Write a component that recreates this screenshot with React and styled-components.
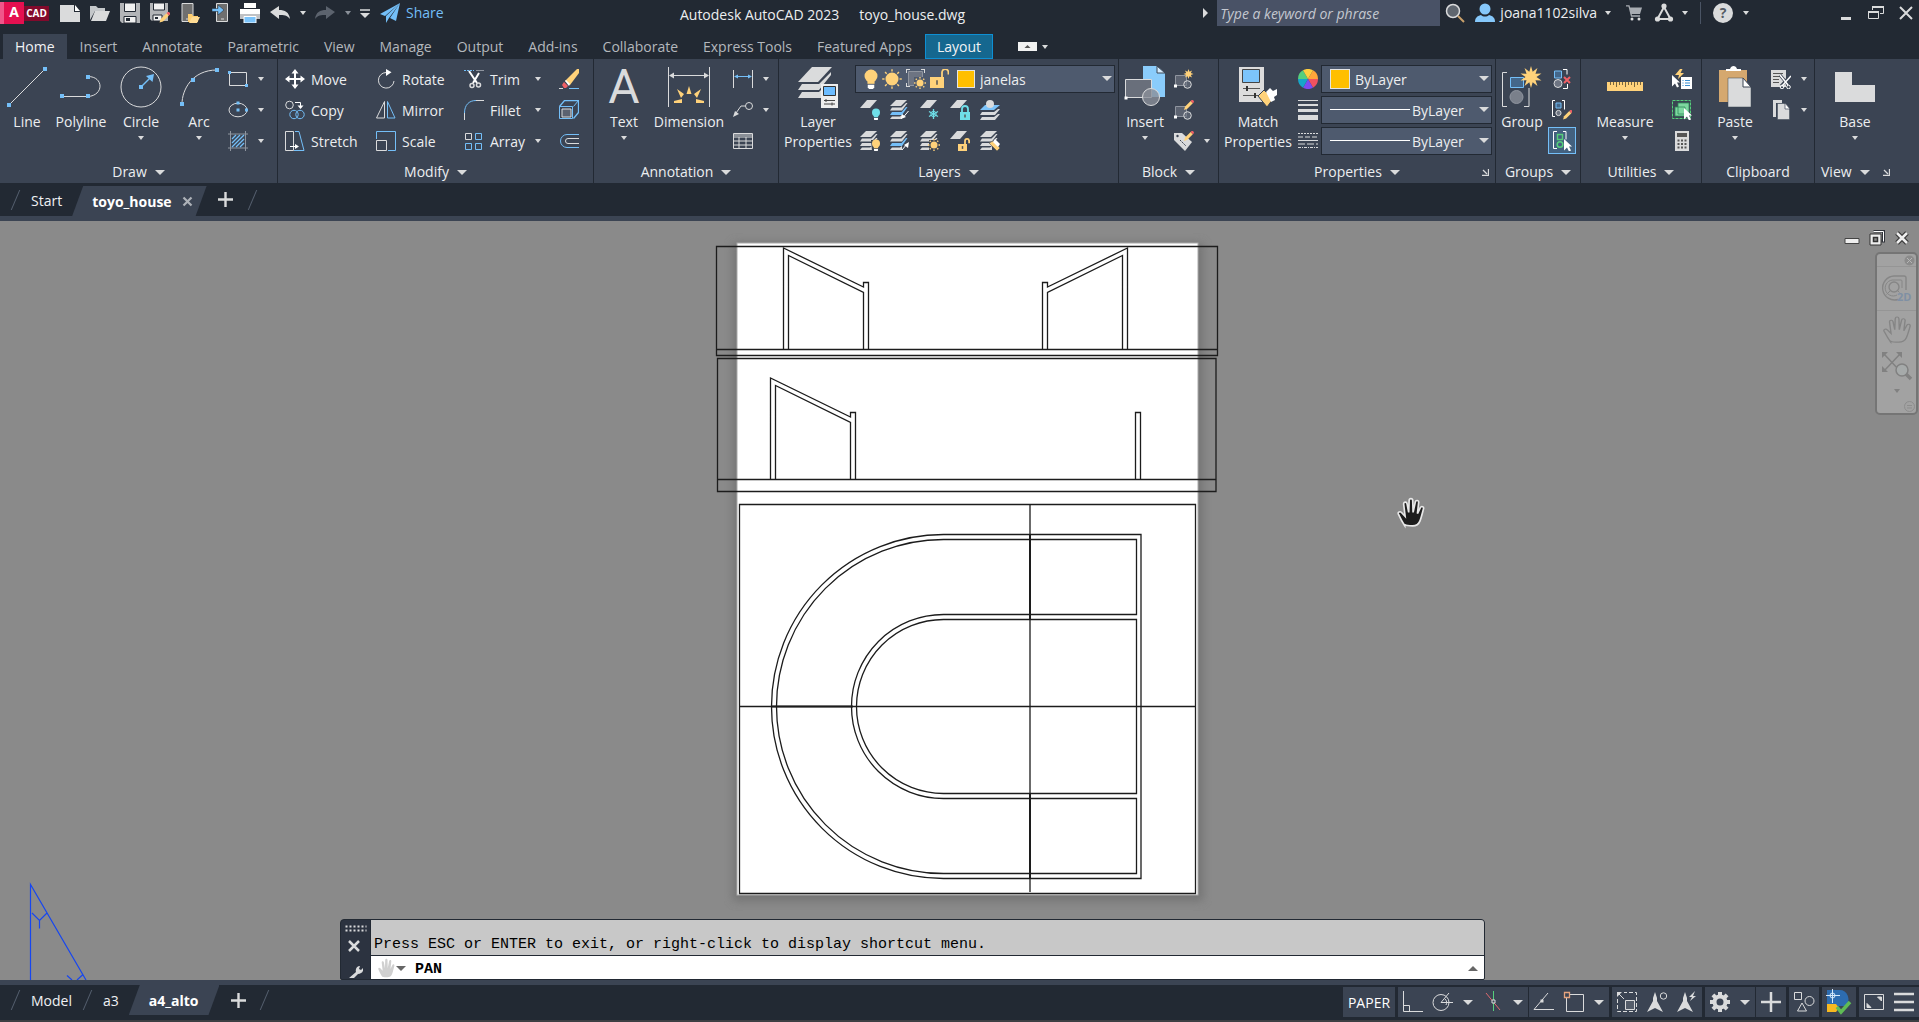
import React from "react";
import styled, { createGlobalStyle } from "styled-components";

const W = "#dadbdc";
const B = "#74bff8";
const Y = "#ffd27a";
const G = "#8f959f";
const P = "#3b4453";
const D = "#222933";

const Global = createGlobalStyle`
  * { box-sizing: border-box; }
  body { margin: 0; background: ${D}; }
  button, input, select {
    font: inherit; color: inherit; border: 0; background: none; padding: 0; margin: 0; outline: 0; border-radius: 0;
  }
  svg { display: block; flex: none; }
`;

/* ---------- layout parts ---------- */

const Window = styled.div`
  display: flex;
  flex-direction: column;
  height: 100vh;
  overflow: hidden;
  background: ${D};
  color: #eceef0;
  font: 14px/20px "Open Sans", "Noto Sans", sans-serif;
`;

const TitleBar = styled.header`
  display: flex;
  flex: none;
  height: 26px;
  align-items: center;
`;

const TitleText = styled.div`
  flex: 1;
  display: flex;
  justify-content: center;
  gap: 20px;
  padding: 3px 0 0 4px;
  white-space: nowrap;
`;

const IconButton = styled.button`
  display: flex;
  flex: none;
  align-items: center;
  justify-content: center;
  width: ${(p) => p.$w || 30}px;
  height: ${(p) => p.$h || 26}px;
`;

const Logo = styled.div`
  display: flex;
  width: 55px;
  height: 26px;
  align-items: center;
`;

const LogoA = styled.b`
  width: 24px;
  height: 22px;
  padding-left: 4px;
  text-align: center;
  color: #fff;
  background: linear-gradient(90deg, #f0568a 4px, #e51050 4px);
`;

const LogoCad = styled.b`
  width: 25px;
  height: 15px;
  text-align: center;
  font-size: 10px;
  line-height: 15px;
  color: #fff;
  background: #820a2c;
`;

const ShareButton = styled.button`
  display: flex;
  align-items: center;
  gap: 6px;
  margin-left: 5px;
  color: ${B};
`;

const Search = styled.input`
  width: 223px;
  height: 26px;
  margin-left: 4px;
  padding: 0 3px;
  background: #495266;
  font-style: italic;
  &::placeholder { color: #c4c8d0; opacity: 1; }
`;

const Divider = styled.span`
  width: 1px;
  height: 22px;
  margin: 0 7px 0 10px;
  background: #4a5464;
`;

const WindowButtons = styled.div`
  display: flex;
  margin: 0 -2px 0 77px;
`;

const RibbonTabs = styled.nav`
  display: flex;
  flex: none;
  gap: 1px;
  height: 33px;
  padding: 8px 0 0 3px;
`;

const RibbonTab = styled.button`
  height: 25px;
  padding: 1px 12px 0;
  white-space: nowrap;
  color: ${(p) => (p.$kind ? "#f2f3f5" : "#b4b8bd")};
  background: ${(p) => (p.$kind === "active" ? P : p.$kind === "context" ? "#15678f" : "none")};
  box-shadow: ${(p) => (p.$kind === "context" ? "inset 0 0 0 1px #0e8fd3" : "none")};
`;

const RibbonToggle = styled.button`
  display: flex;
  align-items: center;
  gap: 5px;
  height: 25px;
  margin-left: 24px;
`;

const Ribbon = styled.section`
  display: flex;
  flex: none;
  height: 124px;
  background: ${P};
`;

const Panel = styled.div`
  display: flex;
  flex-direction: column;
  flex: ${(p) => (p.$w ? `0 0 ${p.$w}px` : "1 0 0")};
  min-width: 0;
  border-right: ${(p) => (p.$w ? `1px solid ${D}` : "0")};
`;

const PanelBody = styled.div`
  display: flex;
  flex: 1;
  padding: 4px 0 0 ${(p) => p.$pad || 0}px;
`;

const PanelFoot = styled.div`
  display: grid;
  grid-template-columns: ${(p) => (p.$start ? "6px auto 1fr" : "1fr auto 1fr")};
  align-items: center;
  height: 23px;
  padding-top: 1px;
`;

const PanelName = styled.button`
  grid-column: 2;
  display: flex;
  align-items: center;
  gap: 8px;
`;

const Launcher = styled.button`
  justify-self: ${(p) => (p.$start ? "start" : "end")};
  margin: 0 6px 0 13px;
`;

const Big = styled.button`
  display: flex;
  flex: none;
  flex-direction: column;
  align-items: center;
  width: ${(p) => p.$w}px;
  height: 92px;
  white-space: nowrap;
`;

const BigIcon = styled.span`
  display: flex;
  align-items: center;
  justify-content: center;
  height: 47px;
  margin-bottom: 2px;
`;

const BigCaret = styled.span`
  padding-top: 4px;
`;

const LetterIcon = styled.span`
  font: 48px/47px "Roboto", sans-serif;
  color: ${W};
`;

const Column = styled.div`
  display: flex;
  flex-direction: column;
  margin-left: ${(p) => p.$gap || 0}px;
`;

const Row = styled.div`
  display: flex;
  height: 31px;
  align-items: center;
`;

const ToolGrid = styled.div`
  display: grid;
  grid-template-columns: 91px 88px 95px 20px;
  grid-auto-rows: 31px;
`;

const Tool = styled.button`
  display: flex;
  align-items: center;
  gap: 6px;
  min-width: 20px;
  height: 31px;
  text-align: left;
`;

const ToolName = styled.span`
  padding-top: 2px;
`;

const DropButton = styled.button`
  display: flex;
  align-items: center;
  justify-content: center;
  width: 26px;
  height: 31px;
`;

const ToolCell = styled.div`
  display: flex;
  align-items: center;
  justify-content: space-between;
  padding-right: 8px;
`;

const ToggleButton = styled(IconButton)`
  background: #43617f;
  border: 1px solid ${B};
`;

const Combo = styled.label`
  display: flex;
  align-items: center;
  width: ${(p) => p.$w}px;
  height: 28px;
  padding: 0 2px 0 8px;
  background: #4e5a6e;
  border: 1px solid ${D};
`;

const ComboSelect = styled.select`
  appearance: none;
  flex: 1;
  min-width: 0;
  padding: 2px 0 0 ${(p) => p.$pad}px;
  height: 26px;
`;

const Swatch = styled.span`
  flex: none;
  width: ${(p) => p.$s}px;
  height: ${(p) => p.$s}px;
  background: #ffbf00;
  border: 1px solid #e4e4e4;
`;

const LineSample = styled.span`
  flex: none;
  width: 80px;
  height: 1px;
  background: #fff;
`;

const ComboIcons = styled.span`
  display: flex;
  align-items: center;
  gap: 4px;
  margin-right: 8px;
`;

const FileTabs = styled.nav`
  display: flex;
  flex: none;
  align-items: center;
  height: ${(p) => p.$h}px;
  padding-left: 10px;
  color: #f0f1f3;
`;

const Slash = styled.span`
  width: 1px;
  height: 20px;
  margin: 0 5px;
  background: #566070;
  transform: skewX(-23deg);
`;

const FileTab = styled.button`
  height: 30px;
  padding: 2px 10px 0;
`;

const ActiveTab = styled.div`
  display: flex;
  align-items: center;
  gap: 10px;
  height: 30px;
  padding: 1px ${(p) => p.$end}px 0 20px;
  font-weight: 700;
  color: #fff;
  background: ${P};
  clip-path: polygon(11px 0, 100% 0, calc(100% - 11px) 100%, 0 100%);
`;

const FileActive = styled(ActiveTab)`
  align-self: flex-end;
`;

const PlusButton = styled(IconButton)`
  margin: 0 6px 0 4px;
`;

const Strip = styled.div`
  flex: none;
  height: 5px;
  background: ${P};
`;

const Canvas = styled.main`
  position: relative;
  flex: 1;
  min-height: 0;
  overflow: hidden;
  background: #8a8a8a;
`;

const Drawing = styled.svg`
  width: 100%;
  height: auto;
`;

const DocButtons = styled.div`
  position: absolute;
  top: 4px;
  right: 5px;
  display: flex;
`;

const NavBar = styled.div`
  position: absolute;
  top: 31px;
  right: 1px;
  display: flex;
  flex-direction: column;
  width: 43px;
  height: 163px;
  background: #a2a2a2;
  border: 2px solid #757575;
  border-radius: 5px;
`;

const NavButton = styled.button`
  display: flex;
  flex: none;
  align-items: center;
  justify-content: ${(p) => (p.$end ? "flex-end" : "center")};
  height: ${(p) => p.$h}px;
  padding: 0 1px;
  border-bottom: ${(p) => (p.$line ? "1px solid #959595" : "0")};
`;

const CommandLine = styled.div`
  position: absolute;
  bottom: 0;
  left: 340px;
  right: 434px;
  display: flex;
  height: 61px;
  border: 1px solid ${D};
  border-radius: 4px 4px 2px 2px;
  background: #2c3340;
  overflow: hidden;
`;

const Grip = styled.div`
  display: flex;
  flex-direction: column;
  align-items: center;
  width: 29px;
  padding-top: 5px;
`;

const CommandArea = styled.div`
  flex: 1;
  border-left: 1px solid ${D};
  color: #000;
  font: 15px/20px "Liberation Mono", monospace;
`;

const History = styled.div`
  height: 36px;
  padding: 15px 3px 0;
  background: #c8c8c8;
  border-bottom: 1px solid ${D};
`;

const Prompt = styled.label`
  display: flex;
  align-items: center;
  height: 23px;
  padding: 1px 6px 0 5px;
  background: #fff;
`;

const PromptInput = styled.input`
  flex: 1;
  height: 22px;
  padding: 3px 0 0 9px;
  font-weight: 700;
`;

const StatusBar = styled.footer`
  display: flex;
  flex: none;
  justify-content: space-between;
  height: 37px;
  border-bottom: 2px solid #3c3f43;
`;

const StatusTools = styled.div`
  display: flex;
  gap: 3px;
  padding-top: 2px;
`;

const StatusGroup = styled.div`
  display: flex;
  height: 30px;
  background: ${P};
`;

const StatusPair = styled.div`
  display: flex;
  gap: 1px;
`;

const PaperButton = styled.button`
  width: 52px;
  padding-top: 1px;
  color: #fff;
`;

const HelpMark = styled.b`
  width: 20px;
  height: 20px;
  border-radius: 50%;
  background: ${W};
  color: #555b64;
  text-align: center;
`;

/* ---------- drawn icons ---------- */

const Svg = ({ w = 20, h = w, vb, children, ...rest }) => (
  <svg width={w} height={h} viewBox={vb || `0 0 ${w} ${h}`} fill="none" stroke={W} strokeWidth="1" aria-hidden="true" {...rest}>
    {children}
  </svg>
);

const Caret = ({ w = 6, fill = W, up }) => (
  <Svg w={w} h={Math.ceil(w / 2) + (w < 8 ? 1 : 0)} vb="0 0 10 5" stroke="none" preserveAspectRatio="none">
    <path d={up ? "M0 5h10L5 0z" : "M0 0h10L5 5z"} fill={fill} />
  </Svg>
);

const Dot = ({ x, y, s = 4, c = B }) => <rect x={x - s / 2} y={y - s / 2} width={s} height={s} fill={c} stroke="none" />;

const star = (cx, cy, R, r, n) =>
  Array.from({ length: n * 2 }, (_, i) => {
    const a = (Math.PI * i) / n - Math.PI / 2;
    const q = i % 2 ? r : R;
    return `${(cx + q * Math.cos(a)).toFixed(2)},${(cy + q * Math.sin(a)).toFixed(2)}`;
  }).join(" ");

const Star = ({ x, y, R, r, n = 8 }) => <polygon points={star(x, y, R, r, n)} fill={Y} stroke="none" />;

const SunShape = ({ x, y, r, R }) => (
  <g>
    <circle cx={x} cy={y} r={r} fill={Y} stroke="none" />
    {Array.from({ length: 8 }, (_, i) => {
      const a = (Math.PI * i) / 4;
      return (
        <path
          key={i}
          stroke={Y}
          strokeWidth="1.4"
          d={`M${(x + (r + 1) * Math.cos(a)).toFixed(2)} ${(y + (r + 1) * Math.sin(a)).toFixed(2)}L${(x + R * Math.cos(a)).toFixed(2)} ${(y + R * Math.sin(a)).toFixed(2)}`}
        />
      );
    })}
  </g>
);

const BulbShape = ({ x, y, r, c = Y }) => (
  <g stroke="none">
    <circle cx={x} cy={y} r={r} fill={c} />
    <path d={`M${x - r * 0.55} ${y + r * 0.6}h${r * 1.1}v${r * 0.6}h${-r * 1.1}z`} fill={c} />
    <path d={`M${x - r * 0.5} ${y + r * 1.35}h${r}v${r * 0.4}l${-r * 0.25} ${r * 0.3}h${-r * 0.5}l${-r * 0.25} ${-r * 0.3}z`} fill="#fff" />
  </g>
);

const LockShape = ({ x, y, w, h, c = Y, open }) => (
  <g>
    <rect x={x} y={y} width={w} height={h} fill={c} stroke="none" />
    <path
      stroke={c}
      strokeWidth="1.8"
      d={open
        ? `M${x + w - 2} ${y}v${-h * 0.4}a${w * 0.23} ${w * 0.25} 0 0 1 ${w * 0.46} 0v2`
        : `M${x + 2} ${y}v-3a${w / 2 - 2} 3 0 0 1 ${w - 4} 0v3`}
    />
    <path d={`M${x + w / 2} ${y + h * 0.3}v${h * 0.4}`} stroke="#555" strokeWidth="1.5" />
  </g>
);

const Sheet = () => <path d="M7 0h10l-7 8H0z" fill={W} stroke="none" />;

const Sheets = ({ mid, low }) => (
  <g stroke="none">
    <path d="M6 0h11l-6 6H0z" fill={W} />
    <path d="M2 7.500h9.500L16 3h1.500L12 10.500H0z" fill={mid || W} />
    <path d="M2 12h9.500L16 7h1.500L12 15H0z" fill={low || W} />
    <path d="M2 16.500h8l2-1.500v4H0z" fill={W} />
  </g>
);

const PencilShape = ({ x, y, s = 1 }) => (
  <g transform={`translate(${x} ${y}) scale(${s})`} stroke="none">
    <path d="M0 9l1-3 5-5 2 2-5 5z" fill={Y} />
    <path d="M6 1l1-1h1l1 1v1L8 3z" fill="#f06066" />
  </g>
);

const CursorShape = ({ x, y, s = 1 }) => (
  <path transform={`translate(${x} ${y}) scale(${s})`} d="M0 0l8 7.500H5l2 4-2 1-2-4-3 3z" fill="#fff" stroke="none" />
);

const HandShape = (props) => (
  <path
    d="M6.500 27C4 23 2 18.500.8 15.800c-.8-2 1.600-3 2.800-1.400L6.800 18 5.500 6.300c-.2-2.300 2.600-2.600 3-.4l1.500 8.300.4-11.400c.1-2.300 3.100-2.300 3.200 0l.3 11.400 2-9.900c.5-2.200 3.300-1.700 3 .5l-1.100 10.600 2.600-5.700c1-2 3.400-1 2.800 1.100-1 4-1.900 8.200-3.200 11.700-1.200 3.200-3.300 4.500-6.500 4.500s-5.300 0-7-1z"
    {...props}
  />
);

const BlockBase = ({ children }) => (
  <Svg>
    <path d="M1.500 6.500h11v10h-11z" fill="#5b6270" stroke={G} />
    <Dot x={1.500} y={17} s={3} c="#fff" />
    <circle cx="13.500" cy="15.500" r="3.800" fill="#6b7280aa" stroke={W} />
    {children}
  </Svg>
);

const I = {
  newFile: <Svg><path d="M0 2h14v7h6v10H0z" fill={W} stroke="none" /><path d="M15 2l5 6h-5z" fill="#fff" stroke="none" /></Svg>,
  open: <Svg><path d="M0 17V3h6l2 2h7v3H5z" fill="#c4c7ca" stroke="none" /><path d="M5 8h15l-4 10H1z" fill={W} stroke="none" /></Svg>,
  save: <Svg><path d="M0 0h20v20H2l-2-2z" fill="#b3b5b8" stroke="none" /><path d="M4.500 0h11v8.500h-11zM4 13.500h12V20H4z" fill="#f1f1f1" stroke={D} /><path d="M6 18h4v-3H6z" fill={D} stroke="none" /></Svg>,
  saveAs: <Svg><path d="M0 0h18v18H2l-2-2z" fill="#b3b5b8" stroke="none" /><path d="M3.500 0h11v7h-11zM3 12h9v6H3z" fill="#f1f1f1" stroke={D} /><path d="M5 16h3v-2H5z" fill={D} stroke="none" /><PencilShape x={9.500} y={9} s={1.180} /></Svg>,
  mobileOpen: <Svg><path d="M2 .5h11v18H2z" fill="#6f6f6f" stroke={W} /><path d="M6 16h3" /><path d="M8 11h4l1 2h5v6H8z" fill="#ffcf70" stroke="none" /><path d="M9 20l3-6h8l-3 6z" fill="#ffdc94" stroke="none" /></Svg>,
  mobileSave: <Svg><path d="M6.500.5h11v18h-11z" fill="#6f6f6f" stroke={W} /><path d="M11 16h3" /><path d="M2 5.500h6V2l6 5-6 5V8.500H2z" fill={B} stroke={D} strokeWidth=".5" /></Svg>,
  print: <Svg><path d="M4 0h12v5H4z" fill="#fff" stroke="none" /><path d="M0 6h20v5H0z" fill="#fff" stroke="none" /><path d="M0 11h20v5H0z" fill="#bfc1c4" stroke="none" /><path d="M4 13.500h12V20H4z" fill="#7cc4fb" stroke="#fff" /></Svg>,
  undo: <Svg><path d="M0 9l9-6v4c6 0 10 2 11 9-3-4-6-4-11-4v4z" fill={W} stroke="none" /></Svg>,
  redo: <Svg><path d="M20 9l-9-6v4C5 7 1 9 0 16c3-4 6-4 11-4v4z" fill="#5c636e" stroke="none" /></Svg>,
  custom: <Svg w={10} h={9}><path d="M0 1h10" strokeWidth="1.500" /><path d="M0 4h10L5 9z" fill={W} stroke="none" /></Svg>,
  share: <Svg><path d="M20 0L0 11l5 2zM20 0L6 13v7l3-5zM20 0L10 15l6 3z" fill={B} stroke="none" /></Svg>,
  right: <Svg w={5} h={10}><path d="M0 0v10l5-5z" fill={W} stroke="none" /></Svg>,
  search: <Svg><circle cx="8" cy="8" r="6.500" fill="#5f666f" stroke={W} strokeWidth="1.500" /><path d="M13 13l6 6" stroke="#c9a06b" strokeWidth="2" /></Svg>,
  user: <Svg><circle cx="10" cy="6" r="5.500" fill="#86c8fb" stroke="none" /><path d="M0 19c0-4 2-6 6-7 2 2 6 2 8 0 4 1 6 3 6 7z" fill="#86c8fb" stroke="none" /></Svg>,
  cart: <Svg w={16} h={16}><path d="M0 .8h3L5.500 11H14" stroke="#a8acb2" strokeWidth="1.300" /><path d="M3.500 2.500H16L14 9H5z" fill="#a8acb2" stroke="none" /><circle cx="6" cy="14" r="1.500" fill={W} stroke="none" /><circle cx="13" cy="14" r="1.500" fill={W} stroke="none" /></Svg>,
  autodesk: <Svg><path d="M10 4l-6.500 12h13z" strokeWidth="2" /><circle cx="10" cy="3" r="2.600" fill={W} stroke="none" /><circle cx="3.500" cy="16" r="2.600" fill={W} stroke="none" /><circle cx="16.500" cy="16" r="2.600" fill={W} stroke="none" /></Svg>,
  min: <Svg w={10} h={16}><path d="M0 13.500h10" strokeWidth="3" /></Svg>,
  restore: <Svg w={16}><path d="M4.500 5V1.500h11v7H12" /><path d="M4 2h12" strokeWidth="2" /><path d="M.5 6.500h10v7H.5z" /><path d="M0 7h11" strokeWidth="2" /></Svg>,
  close: <Svg w={14}><path d="M1 1l12 12M13 1L1 13" strokeWidth="2" /></Svg>,
  toggle: <Svg w={19} h={9}><path d="M0 0h19v9H0z" fill="#f2f2f2" stroke="none" /><path d="M6.500 6h6l-3-3z" fill="#555" stroke="none" /></Svg>,
  line: <Svg w={42}><path d="M3 39L39 3" /><Dot x={3} y={39} /><Dot x={39} y={3} /></Svg>,
  polyline: <Svg w={42}><path d="M2 30.500h26c16-1 16-20 0-20" /><Dot x={2} y={30} /><Dot x={28} y={30} /><Dot x={28} y={11} /></Svg>,
  circle: <Svg w={42}><circle cx="21" cy="21" r="20" /><path d="M21 21l11-11" stroke={B} strokeWidth="1.500" /><path d="M34 8l-1.500 8L26 10z" fill={B} stroke="none" /><Dot x={21} y={21} /></Svg>,
  arc: <Svg w={42}><path d="M4 38C4 24 14 4 39 4" /><Dot x={4} y={38} /><Dot x={15} y={14} /><Dot x={39} y={4} /></Svg>,
  rect: <Svg><path d="M1.500 3.500h17v13h-17z" /><Dot x={1.500} y={3.500} s={3} /><Dot x={18.500} y={16.500} s={3} /></Svg>,
  ellipse: <Svg><ellipse cx="10" cy="10" rx="9" ry="6.800" /><Dot x={10} y={10} s={3} /><Dot x={10} y={3} s={3} /><Dot x={18.500} y={10} s={3} /></Svg>,
  hatch: <Svg><path d="M0 3h20M0 17h20M2.500 0v20M17.500 0v20" stroke={G} /><path d="M4 8l4-4M4 12l8-8M4 16L16 4M8 16l8-8M12 16l4-4" stroke={B} strokeWidth="1.300" /></Svg>,
  move: <Svg><path d="M10 2v16M2 10h16" stroke="#fff" strokeWidth="2" /><path d="M10 0l3.500 4.500h-7zM10 20l3.500-4.500h-7zM0 10l4.500-3.500v7zM20 10l-4.500-3.500v7z" fill="#fff" stroke="none" /></Svg>,
  copy: <Svg><circle cx="4.500" cy="5" r="3.800" /><circle cx="9" cy="14.500" r="4.200" stroke={B} /><circle cx="15" cy="14.500" r="4.200" stroke={B} /><path d="M10 2.500h5.500v4" stroke="#fff" /><path d="M12.500 5.500h6l-3 3.500z" fill="#fff" stroke="none" /></Svg>,
  stretch: <Svg><path d="M.5.500h8v19h-8z" /><path d="M10 .5h4l5 19H9" stroke={B} /><path d="M5 15.500h6" stroke="#fff" /><path d="M10 13l4 2.500-4 2.500z" fill="#fff" stroke="none" /></Svg>,
  rotate: <Svg><path d="M10 3.500a7.800 7.800 0 1 0 8 8.500" /><path d="M10 0l5.500 3.300L10 7z" fill="#fff" stroke="none" /></Svg>,
  mirror: <Svg><path d="M8.500 1.500v16.500h-8z" /><path d="M11.500 1.500v16.500h7.500z" stroke={B} /></Svg>,
  scale: <Svg><path d="M.5 8V.5h19v19H12" stroke={B} /><path d="M.5 9.500h10v10H.5z" /></Svg>,
  trim: <Svg><path d="M0 1.500h10" stroke={B} strokeDasharray="2 1" /><path d="M12 1.500h8" stroke={G} /><path d="M5 2l8 12M15 4L9 14" stroke="#fff" strokeWidth="2" /><circle cx="8" cy="16.500" r="2" strokeWidth="1.500" /><circle cx="14.500" cy="16" r="2" strokeWidth="1.500" /></Svg>,
  fillet: <Svg><path d="M.5 20v-7M12 .5h8" /><path d="M.5 13C.5 5 5 .5 12 .5" stroke={B} /></Svg>,
  array: <Svg w={20}><path d="M1.500 2.500h6v6h-6z" /><path d="M11.500 2.500h6v6h-6zM1.500 12.500h6v6h-6zM11.500 12.500h6v6h-6z" stroke={B} /></Svg>,
  erase: <Svg><path d="M6 12L18 0h2v4l-9 12z" fill={Y} stroke="none" /><path d="M5 13l4 4-2 2H5l-2-3z" fill="#f06066" stroke="none" /><path d="M6 12l1-1 4 4-1 2z" fill="#fff" stroke="none" /><path d="M0 19.500h4" /><path d="M10 19.500h10" stroke={B} /></Svg>,
  explode: <Svg><path d="M.5 6.500l5-6h14v12l-5 6" stroke={B} strokeWidth="1.300" /><path d="M14.500 6.500l5-6" stroke={B} /><path d="M.5 6.500h13v12H.5z" stroke={B} /><path d="M3 9h9v8H3z" fill="#5b6270" stroke={W} /></Svg>,
  offset: <Svg><path d="M20 3.500H8a6.500 6.500 0 0 0 0 13h12" stroke={B} /><path d="M20 7.500H9a2.500 2.500 0 0 0 0 5h11" stroke={W} /></Svg>,
  dimension: <Svg w={42}><path d="M.5 1v40M41.500 1v40M2 9.500h38" /><path d="M1 9.500l5-3v6zM41 9.500l-5-3v6z" fill={W} stroke="none" /><path d="M21 20l2.500 8h-5zM9 23l7 5-3 4zM33 23l-7 5 3 4zM6 35l8-2v4H6zM36 35l-8-2v4h8z" fill={Y} stroke="none" /></Svg>,
  linear: <Svg><path d="M.5 1v18M19.500 1v18" /><path d="M2 7.500h16" stroke={B} /><path d="M1 7.500l4-2v4zM19 7.500l-4-2v4z" fill={B} stroke="none" /></Svg>,
  leader: <Svg><circle cx="16" cy="6" r="3.500" /><path d="M12.500 6H8L3 13" /><path d="M0 17l2-6 4 3z" fill={W} stroke="none" /></Svg>,
  table: <Svg><path d="M.5 2.500h19v15H.5zM.5 6h19M.5 10h19M.5 14h19M6 6v12M13 6v12" /><path d="M1 4h18" /></Svg>,
  layerProps: <Svg w={42}><path d="M15 1h20L21 16H1z" fill={W} stroke="none" /><path d="M5 18h17l12-12v3L22 24H1zM5 26h17l4-4v10H1z" fill={W} stroke="none" /><path d="M24 18h17v24H24z" fill="#eee" stroke="none" /><path d="M26.500 20.500h12v9h-12z" fill="#6cbcff" stroke="#333" /><path d="M27 34.500h11M27 38h11" stroke="#444" /><path d="M29 33v3M35 36.500v3" stroke="#444" /></Svg>,
  bulb: <Svg w={14} h={20}><BulbShape x={7} y={7} r={6.500} /></Svg>,
  sun: <Svg><SunShape x={10} y={10} r={6.500} R={9.800} /></Svg>,
  vpSun: <Svg><path d="M2.500 2.500h14v14h-14z" fill="#6d7482" stroke={G} /><path d="M0 .5h4M.5 0v4M19 .5h-4M18.500 0v4M0 17.500h4M.5 14v4" /><path d="M8 8h12v12H8z" fill="#4e5a6e" stroke="none" /><SunShape x={14} y={14} r={3.500} R={6} /></Svg>,
  unlockBig: <Svg w={19} h={20}><LockShape x={0} y={8} w={14} h={11} open /></Svg>,
  lay1: <Svg><Sheet /><BulbShape x={16} y={12.500} r={4} c="#6fdfe8" /></Svg>,
  lay2: <Svg><Sheets low={B} /><path d="M18.500 11l-5 6" stroke="#fff" /><path d="M11 19l1-5 4 3z" fill="#fff" stroke="none" /></Svg>,
  lay3: <Svg><Sheet /><path d="M13.500 9v10M9 11.500l9 5M18 11.500l-9 5" stroke="#6fdfe8" strokeWidth="1.300" /><circle cx="13.500" cy="14" r="2.700" stroke="#6fdfe8" /></Svg>,
  lay4: <Svg><Sheet /><LockShape x={10} y={12} w={10} h={8} c="#6fdfe8" /></Svg>,
  lay5: <Svg><path d="M5 5h15l-6 5H0z" fill="#7cc4fb" stroke="none" /><path d="M2 12h12l4-3h2l-5 6H0zM2 17h12l4-3h2l-5 6H0z" fill={W} stroke="none" /><circle cx="10" cy="4" r="4" fill={W} stroke="none" /></Svg>,
  lay6: <Svg><Sheets /><path d="M11 9h9v11h-8z" fill={P} stroke="none" /><BulbShape x={16} y={12.500} r={4} /></Svg>,
  lay7: <Svg><Sheets low={B} /><path d="M12 19l5-6" stroke="#fff" /><path d="M19 11l-1 6-4-3z" fill="#fff" stroke="none" /></Svg>,
  lay8: <Svg><Sheets /><path d="M9 9h11v11H9z" fill={P} stroke="none" /><SunShape x={14} y={14} r={3.500} R={6} /></Svg>,
  lay9: <Svg><Sheet /><LockShape x={8} y={13} w={9} h={7} open /></Svg>,
  lay10: <Svg><Sheets /><path d="M9 12l4-2 7 7-3 3z" fill={Y} stroke={P} strokeWidth=".5" /><path d="M13 11l2-3 5 5-2 3z" fill="#fff" stroke="none" /></Svg>,
  insert: <Svg w={42}><path d="M19 0h14l8 7v24H19z" fill="#8accfb" stroke="none" /><path d="M33 0v7h8z" fill="#d6ecfd" stroke={P} /><path d="M1.500 13.500h26v18h-26z" fill="#696f7b" stroke={W} /><circle cx="27" cy="31" r="8.500" fill="#8a8f99cc" stroke={W} /><Dot x={2} y={32} s={3} c="#fff" /></Svg>,
  blockNew: <BlockBase><Star x={14.500} y={5} R={5} r={2.500} /></BlockBase>,
  blockEdit: <BlockBase><PencilShape x={10} y={0} s={1.100} /></BlockBase>,
  attrib: <Svg><path d="M0 2h8l10 9-7 9-11-11z" fill={W} stroke="none" /><circle cx="3.500" cy="5" r="1.200" fill={P} stroke="none" /><path d="M6 9l6 6" stroke={P} strokeDasharray="2 1" /><PencilShape x={10} y={0} s={1.100} /></Svg>,
  match: <Svg w={42}><path d="M2 1h25v35H2z" fill="#dcdcdc" stroke="none" /><path d="M5.500 3.500h17v13h-17z" fill="#7cc4fb" stroke="#444" /><path d="M6 22.500h17M6 29.500h17" stroke="#555" /><path d="M10 20v5M18 27v5" stroke="#333" strokeWidth="2" /><path d="M21 30l6-6 9 9-6 8z" fill={Y} stroke={P} /><path d="M29 26l4-4 3 3 4-2v6l-3 2 1 3-4 2z" fill="#fff" stroke="none" /></Svg>,
  wheel: (
    <Svg>
      {["#ffa63a", "#f0525f", "#7d4bf2", "#17a6c9", "#56cf7c", "#ffcf3f"].map((c, i) => {
        const p = (k) => `${(10 + 10 * Math.sin((k * Math.PI) / 3)).toFixed(2)} ${(10 - 10 * Math.cos((k * Math.PI) / 3)).toFixed(2)}`;
        return <path key={c} d={`M10 10L${p(i + 0.5)}A10 10 0 0 1 ${p(i + 1.5)}z`} fill={c} stroke="none" />;
      })}
    </Svg>
  ),
  weights: <Svg><path d="M0 .5h20" /><path d="M0 5h20" strokeWidth="2" /><path d="M0 10.500h20" strokeWidth="3" /><path d="M0 17.500h20" strokeWidth="5" /></Svg>,
  types: <Svg><path d="M0 2.500h20" strokeDasharray="2 1" /><path d="M0 6h20" strokeDasharray="5 2" /><path d="M0 9.500h20" /><path d="M0 13h20" strokeDasharray="7 2" /><path d="M0 16.500h20" strokeDasharray="3 1 1 1" /></Svg>,
  group: <Svg w={42}><path d="M6 6.500H1.500v34H6M23 40.500h5V22" stroke={W} /><path d="M9.500 11.500h13v10h-13z" fill="#44678a" stroke={B} /><circle cx="15.500" cy="31" r="6.500" fill="#7a808b" stroke={G} /><Star x={30} y={11} R={11} r={5.500} n={10} /></Svg>,
  ungroup: <Svg><path d="M2.500 2h7v7h-7z" fill="#44678a" stroke={B} /><circle cx="6" cy="14.500" r="4" fill="#6d7482" /><path d="M11 .5h4v5M15.500 15v4.500H11" stroke="#fff" /><path d="M12 8l6 6M18 8l-6 6" stroke="#f06066" strokeWidth="2" /></Svg>,
  groupEdit: <Svg><path d="M3 .5H.5v16H3M10 .5h2.500v9" stroke="#fff" /><path d="M4 3h5v5H4z" fill="#44678a" stroke={B} /><circle cx="6.500" cy="13" r="2.600" fill="#6d7482" /><PencilShape x={11} y={10} s={1.050} /></Svg>,
  groupSel: <Svg><path d="M5 .5H1.500v17H5M11 .5h3v8" stroke="#fff" /><path d="M5.500 3.500h5v5h-5z" stroke="#56cf7c" strokeWidth="1.500" /><circle cx="8" cy="13.500" r="2.800" stroke="#56cf7c" strokeWidth="1.500" /><CursorShape x={12} y={8} /></Svg>,
  measure: <Svg w={42}><path d="M3 16h36v9H3z" fill={Y} stroke="none" /><path d="M6.500 16v3M9.500 16v3M12.500 16v5M15.500 16v3M18.500 16v3M21.500 16v5M24.500 16v3M27.500 16v3M30.500 16v5M33.500 16v3M36.500 16v3" stroke="#77663f" /></Svg>,
  quickSel: <Svg><path d="M9 8h11v12H9z" fill="#fff" stroke="none" /><path d="M13 11.500h5M13 14h5M13 16.500h5M10.500 11.500h1M10.500 14h1M10.500 16.500h1" stroke="#3a8fd0" /><path d="M8 0L3 6h4l-1 4 6-6H8.500l2-4z" fill={Y} stroke="none" /><CursorShape x={0} y={6} /></Svg>,
  selAll: <Svg><path d="M.5.500h18v18H.5z" stroke="#56cf7c" strokeDasharray="3 1" /><path d="M3 7h10v9H3zM6 3h11v11H6z" fill="#7ed6a0" stroke="#2f8a58" strokeWidth=".8" /><CursorShape x={12} y={8} /></Svg>,
  calc: <Svg><path d="M3 0h14v20H3z" fill={W} stroke="none" /><path d="M5 2h10v4H5z" fill="#555" stroke="none" /><path d="M5.500 9.500h9M5.500 13h9M5.500 16.500h9" stroke="#555" strokeWidth="2" strokeDasharray="2 1.500" /></Svg>,
  paste: <Svg w={34} h={42}><path d="M1 4h28v32H1z" fill="#d5a86f" stroke="none" /><path d="M8 5V3h4c1-4 6-4 7 0h4v2z" fill="#fff" stroke="none" /><path d="M10 12h15l8 9v20H10z" fill={W} stroke={P} strokeWidth=".5" /><path d="M25 12v9h8z" fill="#fff" stroke={P} /></Svg>,
  cut: <Svg><path d="M0 1h15v17H0z" fill={W} stroke="none" /><path d="M2 4.500h10M2 7.500h10M2 10.500h6M2 13.500h6" stroke="#555" /><path d="M9 6l9 11M20 6l-10 11" stroke={P} strokeWidth="3" /><path d="M9 6l8 10M20 7l-9 10" stroke="#fff" strokeWidth="1.500" /><circle cx="11" cy="18" r="1.800" stroke="#fff" /><circle cx="17.500" cy="18" r="1.800" stroke="#fff" /></Svg>,
  copyClip: <Svg><path d="M2 0h9v3H5v14H2z" fill={W} stroke="none" /><path d="M6.500 3.500h8l4 5v11h-12z" fill={W} stroke={P} strokeWidth=".5" /><path d="M14 3v6h5z" fill="#fff" stroke={P} strokeWidth=".7" /></Svg>,
  base: <Svg w={42}><path d="M1 6h17v13h23v17H1z" fill={W} stroke="none" /></Svg>,
  launch: <Svg w={7}><path d="M1 1l4 4" strokeWidth="1.200" /><path d="M6.500 0v6.500H0" strokeWidth="1.300" /></Svg>,
  tabClose: <Svg w={11}><path d="M1.500 1.500l8 8M9.500 1.500l-8 8" stroke="#aeb2b8" strokeWidth="2.200" /></Svg>,
  plus: <Svg w={15}><path d="M7.500 0v15M0 7.500h15" strokeWidth="2.400" /></Svg>,
  docMin: <Svg w={16}><path d="M1 8.500h14v5H1z" fill="#eee" stroke="#444" /></Svg>,
  docRestore: <Svg w={16}><path d="M4.500 1h10v10h-2" stroke="#30333a" strokeWidth="3" /><path d="M4.500 1.500h10v10" stroke="#fff" /><path d="M1 4h11v11H1z" fill="#eee" stroke="#333" /><path d="M4.500 7.500h4v4h-4z" fill="#8a8a8a" stroke="#333" strokeWidth="1.500" /></Svg>,
  docClose: <Svg w={16}><path d="M3 3l10 10M13 3L3 13" stroke="#3a3a3a" strokeWidth="5" /><path d="M3 3l10 10M13 3L3 13" stroke="#eee" strokeWidth="2.500" /></Svg>,
  navClose: <Svg w={11}><circle cx="5.500" cy="5.500" r="5" fill="#8b8b8b" stroke="none" /><path d="M3 3l5 5M8 3L3 8" stroke="#b5b5b5" /></Svg>,
  navWheel: <Svg w={34} h={32} stroke="#868686"><path d="M26 17V5q0-2-2-2H14A12 12 0 1 0 18 26.500" strokeWidth="1.400" /><path d="M22 15V8q0-1-1-1h-7a8 8 0 1 0 3 15" strokeWidth="1" /><circle cx="14" cy="14" r="5" strokeWidth="1.400" /><path d="M10.500 17.500l-4 4M17.500 17.500l2 2" /><text x="17" y="28" fontSize="11" fontWeight="700" fontFamily="Open Sans, sans-serif" fill="#7f90a4" stroke="none">2D</text></Svg>,
  navHand: <Svg w={29} h={30} vb="-1 -1 25 31" preserveAspectRatio="none"><HandShape stroke="#858585" fill="none" strokeWidth="1.200" /></Svg>,
  navZoom: <Svg w={32} h={30} stroke="#818181"><path d="M3 3l16 17M19 3L3 20" strokeWidth="1.500" /><path d="M1 1h6L1 7zM21 1v6l-6-6zM1 21v-6l6 6z" fill="#818181" stroke="none" /><circle cx="21" cy="19" r="6" fill="#a6aaaa" strokeWidth="1.500" /><path d="M25 23l5 5" strokeWidth="3.500" /></Svg>,
  navMore: <Svg w={11}><circle cx="5.500" cy="5.500" r="5" stroke="#8d8d8d" /><path d="M3 4.500h5M3 7h5" stroke="#8d8d8d" /></Svg>,
  grip: <Svg w={22} h={7}><path d="M.5 1.500h21M.5 5.500h21" strokeWidth="2" strokeDasharray="2 2" /></Svg>,
  cmdClose: <Svg w={16} h={12}><path d="M1 1l10 10M11 1L1 11" strokeWidth="2.500" /></Svg>,
  wrench: <Svg w={14}><path d="M0 13l7-6c-1-3 1-6 4-6L10 4l2 1 2-2c1 4-2 6-5 6l-4 4z" fill={W} stroke="none" /></Svg>,
  promptHand: <Svg w={20} h={20} vb="0 0 23 28"><HandShape fill="#d0d0d0" stroke="none" /></Svg>,
  ortho: <Svg w={22}><path d="M1.500 0v20.500H21M1.500 14.500h6v6" /></Svg>,
  polar: <Svg w={22}><circle cx="9" cy="11.500" r="8" /><path d="M9 11.500h12M9 11.500L17 2M13 8c2 2 2 4 1 6" /></Svg>,
  iso: <Svg w={22}><path d="M4 2l14 17" stroke="#e06a6f" /><path d="M11.500 0v20" stroke="#56cf7c" /><path d="M10 9h3v3h-3z" fill={P} /></Svg>,
  track: <Svg w={22}><path d="M15 2L1 18.500h20" /><Dot x={9} y={10} s={3} c={W} /></Svg>,
  osnap: <Svg w={22}><path d="M6 3.500h14.500v17H3.500V7" /><path d="M1.500 1.500h5v5h-5z" stroke="#e5a47e" strokeWidth="1.300" /></Svg>,
  annoScale: <Svg w={22}><path d="M1.500 8v12.500h19v-19H8" strokeDasharray="4 2" /><path d="M9.500 9.500h9v9h-9z" fill="#555d6a" /><path d="M2 2l6 6" /><path d="M1 1h5L1 6z" fill={W} stroke="none" /></Svg>,
  annoVis: <Svg w={22}><path d="M9 1l2 6v3l6 11-8-4-8 4 6-11V7z" fill={W} stroke="none" /><circle cx="17.500" cy="5" r="3.200" /></Svg>,
  annoAuto: <Svg w={22}><path d="M9 1l2 6v3l6 11-8-4-8 4 6-11V7z" fill={W} stroke="none" /><path d="M19 0l-6 6h3l-2 4 6-5h-3z" fill={W} stroke="none" /></Svg>,
  gear: (
    <Svg w={22}>
      <circle cx="11" cy="11" r="5.500" strokeWidth="4" />
      {Array.from({ length: 8 }, (_, i) => <path key={i} d="M11 1v4" strokeWidth="4" transform={`rotate(${i * 45} 11 11)`} />)}
    </Svg>
  ),
  plusBig: <Svg w={20}><path d="M10 0v20M0 10h20" strokeWidth="2.500" /></Svg>,
  shapes: <Svg w={22}><path d="M1.500 1.500h7v7h-7z" /><circle cx="16.500" cy="10" r="4.500" /><path d="M9 12l-4.500 8h9z" /></Svg>,
  dwg: <Svg w={26}><path d="M3 1h10a9 9 0 0 1 6 16H1V1z" fill="#2d6cb0" stroke="none" /><path d="M6.500 0v14M0 6.500h14" stroke="#d4e8fa" /><circle cx="6.500" cy="6.500" r="2.500" stroke="#d4e8fa" /><path d="M1 15h9l3 4-3 4H1z" fill="#f6b820" stroke="none" /><path d="M11 18l4 5 9-10" stroke="#5fbb55" strokeWidth="3.500" /></Svg>,
  full: <Svg w={22}><path d="M1.500 3.500h19v15h-19z" /><path d="M4 16.500v-4l4 4zM18.500 6v4l-4-4z" fill={W} /></Svg>,
  menu: <Svg w={22}><path d="M1 3h20M1 11h20M1 19h20" strokeWidth="2.500" /></Svg>,
};

/* ---------- composed controls ---------- */

const BigTool = ({ icon, lines, w, drop }) => (
  <Big $w={w}>
    <BigIcon>{icon}</BigIcon>
    {lines.map((t) => <span key={t}>{t}</span>)}
    {drop && <BigCaret><Caret /></BigCaret>}
  </Big>
);

const SmallTool = ({ icon, label, drop }) => (
  <Row>
    <Tool aria-label={label}>{icon}</Tool>
    {drop && <DropButton aria-label={`${label} options`}><Caret /></DropButton>}
  </Row>
);

const LabelTool = ({ icon, label, drop }) => (
  <ToolCell>
    <Tool>{icon}<ToolName>{label}</ToolName></Tool>
    {drop && <DropButton aria-label={`${label} options`}><Caret /></DropButton>}
  </ToolCell>
);

const RibbonPanel = ({ name, w, pad, launcher, start, plain, children }) => (
  <Panel $w={w}>
    <PanelBody $pad={pad}>{children}</PanelBody>
    <PanelFoot $start={start}>
      <PanelName>{name}{!plain && <Caret w={10} />}</PanelName>
      {launcher && <Launcher $start={start} aria-label={`${name} settings`}>{I.launch}</Launcher>}
    </PanelFoot>
  </Panel>
);

const ComboBox = ({ w, label, value, pad, children }) => (
  <Combo $w={w}>
    {children}
    <ComboSelect aria-label={label} $pad={pad}><option>{value}</option></ComboSelect>
    <Caret w={10} />
  </Combo>
);

const ribbonTabs = ["Home", "Insert", "Annotate", "Parametric", "View", "Manage", "Output", "Add-ins", "Collaborate", "Express Tools", "Featured Apps", "Layout"];

const Plot = () => (
  <Drawing viewBox="0 221 1919 759" preserveAspectRatio="xMinYMin meet" fill="none" stroke="#1c1c1c" strokeWidth="1.300" role="img" aria-label="toyo_house a4_alto layout">
    <defs>
      <filter id="paperShadow" x="-10%" y="-10%" width="120%" height="120%">
        <feGaussianBlur stdDeviation="5" />
      </filter>
    </defs>
    <rect x="733" y="243" width="470" height="658" fill="#6a6a6a" stroke="none" filter="url(#paperShadow)" opacity=".7" />
    <rect x="737" y="243" width="461" height="652" fill="#fff" stroke="#aaa" strokeWidth="1" />
    <path d="M716.500 246.500h501v109h-501zM716.500 349.500h501" />
    <path d="M783.500 349V248l80 39v-4.500h5V349M788.500 349v-93.500l75 37V349" />
    <path d="M1127.500 349V248l-80 39v-4.500h-5V349M1122.500 349v-93.500l-75 37V349" />
    <path d="M717.500 358.500h498.500v133h-498.500zM717.500 479.500h498.500" />
    <path d="M770.500 479V378l80 39v-4.500h5V479M775.500 479v-93.500l75 37V479" />
    <path d="M1135.500 479v-66.500h5V479" />
    <path d="M739.500 504.500h456v389h-456zM740 706.500h455M1030 504v388" />
    <path d="M1030 534v85M1030 793v85M772 706.500h81" strokeWidth="2" />
    <path d="M943.500 534.500h197.500v344H943.500a172 172 0 0 1 0-344z" />
    <path d="M943.500 539.500h193v75h-193a92 92 0 0 0 0 184h193v75h-193a167 167 0 0 1 0-334z" />
    <path d="M943.500 619.500h193v174h-193a87 87 0 0 1 0-174z" />
    <path d="M86 980L30.500 884.500V980M32 913l7.500 7.500 7.500-7.500M39.500 920.500v8M67 975.500l5 4.500M83 974.500l-6 5.500" stroke="#1646f0" strokeWidth="1.200" />
    <g transform="translate(1397.500 497.500) scale(1.120 1.050)">
      <HandShape fill="#1c1c1c" stroke="#e8e8e8" strokeWidth="1.500" />
    </g>
  </Drawing>
);

export default function App() {
  return (
    <Window>
      <Global />
      <TitleBar>
        <Logo><LogoA>A</LogoA><LogoCad>CAD</LogoCad></Logo>
        <IconButton aria-label="New">{I.newFile}</IconButton>
        <IconButton aria-label="Open">{I.open}</IconButton>
        <IconButton aria-label="Save">{I.save}</IconButton>
        <IconButton aria-label="Save As">{I.saveAs}</IconButton>
        <IconButton aria-label="Open from mobile">{I.mobileOpen}</IconButton>
        <IconButton aria-label="Save to mobile">{I.mobileSave}</IconButton>
        <IconButton aria-label="Plot">{I.print}</IconButton>
        <IconButton aria-label="Undo">{I.undo}</IconButton>
        <IconButton aria-label="Undo list" $w={15}><Caret /></IconButton>
        <IconButton aria-label="Redo">{I.redo}</IconButton>
        <IconButton aria-label="Redo list" $w={15}><Caret fill="#8a9099" /></IconButton>
        <IconButton aria-label="Customize" $w={20}>{I.custom}</IconButton>
        <ShareButton>{I.share}Share</ShareButton>
        <TitleText><span>Autodesk AutoCAD 2023</span><span>toyo_house.dwg</span></TitleText>
        <IconButton aria-label="Collapse search" $w={16}>{I.right}</IconButton>
        <Search aria-label="Search" placeholder="Type a keyword or phrase" />
        <IconButton aria-label="Search">{I.search}</IconButton>
        <IconButton aria-label="Account">{I.user}</IconButton>
        <button>joana1102silva</button>
        <IconButton aria-label="Account menu" $w={22}><Caret /></IconButton>
        <IconButton aria-label="Store">{I.cart}</IconButton>
        <IconButton aria-label="Autodesk apps">{I.autodesk}</IconButton>
        <IconButton aria-label="Apps menu" $w={11}><Caret /></IconButton>
        <Divider />
        <IconButton aria-label="Help"><HelpMark>?</HelpMark></IconButton>
        <IconButton aria-label="Help menu" $w={16}><Caret /></IconButton>
        <WindowButtons>
          <IconButton aria-label="Minimize">{I.min}</IconButton>
          <IconButton aria-label="Restore">{I.restore}</IconButton>
          <IconButton aria-label="Close">{I.close}</IconButton>
        </WindowButtons>
      </TitleBar>

      <RibbonTabs>
        {ribbonTabs.map((t) => (
          <RibbonTab key={t} $kind={t === "Home" ? "active" : t === "Layout" ? "context" : undefined}>{t}</RibbonTab>
        ))}
        <RibbonToggle aria-label="Minimize ribbon">{I.toggle}<Caret /></RibbonToggle>
      </RibbonTabs>

      <Ribbon>
        <RibbonPanel name="Draw" w={278}>
          <BigTool icon={I.line} lines={["Line"]} w={54} />
          <BigTool icon={I.polyline} lines={["Polyline"]} w={54} />
          <BigTool icon={I.circle} lines={["Circle"]} w={66} drop />
          <BigTool icon={I.arc} lines={["Arc"]} w={50} drop />
          <Column $gap={4}>
            <SmallTool icon={I.rect} label="Rectangle" drop />
            <SmallTool icon={I.ellipse} label="Ellipse" drop />
            <SmallTool icon={I.hatch} label="Hatch" drop />
          </Column>
        </RibbonPanel>

        <RibbonPanel name="Modify" w={316} pad={7}>
          <ToolGrid>
            <LabelTool icon={I.move} label="Move" />
            <LabelTool icon={I.rotate} label="Rotate" />
            <LabelTool icon={I.trim} label="Trim" drop />
            <SmallTool icon={I.erase} label="Erase" />
            <LabelTool icon={I.copy} label="Copy" />
            <LabelTool icon={I.mirror} label="Mirror" />
            <LabelTool icon={I.fillet} label="Fillet" drop />
            <SmallTool icon={I.explode} label="Explode" />
            <LabelTool icon={I.stretch} label="Stretch" />
            <LabelTool icon={I.scale} label="Scale" />
            <LabelTool icon={I.array} label="Array" drop />
            <SmallTool icon={I.offset} label="Offset" />
          </ToolGrid>
        </RibbonPanel>

        <RibbonPanel name="Annotation" w={185} pad={3}>
          <BigTool icon={<LetterIcon aria-hidden="true">A</LetterIcon>} lines={["Text"]} w={54} drop />
          <BigTool icon={I.dimension} lines={["Dimension"]} w={76} />
          <Column $gap={6}>
            <SmallTool icon={I.linear} label="Linear" drop />
            <SmallTool icon={I.leader} label="Leader" drop />
            <SmallTool icon={I.table} label="Table" />
          </Column>
        </RibbonPanel>

        <RibbonPanel name="Layers" w={340} pad={3}>
          <BigTool icon={I.layerProps} lines={["Layer", "Properties"]} w={72} />
          <Column $gap={1}>
            <Row>
              <ComboBox w={260} label="Layer" value="janelas" pad={5}>
                <ComboIcons>{I.bulb}{I.sun}{I.vpSun}{I.unlockBig}</ComboIcons>
                <Swatch $s={18} />
              </ComboBox>
            </Row>
            <Row>
              <IconButton aria-label="Layer off">{I.lay1}</IconButton>
              <IconButton aria-label="Isolate">{I.lay2}</IconButton>
              <IconButton aria-label="Freeze">{I.lay3}</IconButton>
              <IconButton aria-label="Lock">{I.lay4}</IconButton>
              <IconButton aria-label="Make current">{I.lay5}</IconButton>
            </Row>
            <Row>
              <IconButton aria-label="All layers on">{I.lay6}</IconButton>
              <IconButton aria-label="Unisolate">{I.lay7}</IconButton>
              <IconButton aria-label="Thaw all">{I.lay8}</IconButton>
              <IconButton aria-label="Unlock">{I.lay9}</IconButton>
              <IconButton aria-label="Match layer">{I.lay10}</IconButton>
            </Row>
          </Column>
        </RibbonPanel>

        <RibbonPanel name="Block" w={100}>
          <BigTool icon={I.insert} lines={["Insert"]} w={52} drop />
          <Column $gap={3}>
            <SmallTool icon={I.blockNew} label="Create block" />
            <SmallTool icon={I.blockEdit} label="Edit block" />
            <SmallTool icon={I.attrib} label="Attributes" drop />
          </Column>
        </RibbonPanel>

        <RibbonPanel name="Properties" w={277} pad={2} launcher>
          <BigTool icon={I.match} lines={["Match", "Properties"]} w={74} />
          <Column $gap={3}>
            <Row>{I.wheel}</Row>
            <Row>{I.weights}</Row>
            <Row>{I.types}</Row>
          </Column>
          <Column $gap={3}>
            <Row><ComboBox w={171} label="Color" value="ByLayer" pad={5}><Swatch $s={20} /></ComboBox></Row>
            <Row><ComboBox w={171} label="Lineweight" value="ByLayer" pad={2}><LineSample /></ComboBox></Row>
            <Row><ComboBox w={171} label="Linetype" value="ByLayer" pad={2}><LineSample /></ComboBox></Row>
          </Column>
        </RibbonPanel>

        <RibbonPanel name="Groups" w={85}>
          <BigTool icon={I.group} lines={["Group"]} w={52} />
          <Column>
            <Row><IconButton aria-label="Ungroup" $w={28}>{I.ungroup}</IconButton></Row>
            <Row><IconButton aria-label="Edit group" $w={28}>{I.groupEdit}</IconButton></Row>
            <Row><ToggleButton aria-label="Group selection" $w={28} $h={27}>{I.groupSel}</ToggleButton></Row>
          </Column>
        </RibbonPanel>

        <RibbonPanel name="Utilities" w={121} pad={9}>
          <BigTool icon={I.measure} lines={["Measure"]} w={70} drop />
          <Column $gap={12}>
            <SmallTool icon={I.quickSel} label="Quick select" />
            <SmallTool icon={I.selAll} label="Select all" />
            <SmallTool icon={I.calc} label="Calculator" />
          </Column>
        </RibbonPanel>

        <RibbonPanel name="Clipboard" w={113} plain>
          <BigTool icon={I.paste} lines={["Paste"]} w={66} drop />
          <Column $gap={3}>
            <SmallTool icon={I.cut} label="Cut" drop />
            <SmallTool icon={I.copyClip} label="Copy clip" drop />
          </Column>
        </RibbonPanel>

        <RibbonPanel name="View" launcher start>
          <BigTool icon={I.base} lines={["Base"]} w={80} drop />
        </RibbonPanel>
      </Ribbon>

      <FileTabs $h={33}>
        <Slash />
        <FileTab>Start</FileTab>
        <FileActive $end={14}>toyo_house<button aria-label="Close tab">{I.tabClose}</button></FileActive>
        <PlusButton aria-label="New drawing">{I.plus}</PlusButton>
        <Slash />
      </FileTabs>
      <Strip />

      <Canvas>
        <Plot />
        <DocButtons>
          <IconButton aria-label="Minimize drawing" $w={25} $h={26}>{I.docMin}</IconButton>
          <IconButton aria-label="Restore drawing" $w={25} $h={26}>{I.docRestore}</IconButton>
          <IconButton aria-label="Close drawing" $w={25} $h={26}>{I.docClose}</IconButton>
        </DocButtons>
        <NavBar>
          <NavButton $h={13} $end $line aria-label="Close bar">{I.navClose}</NavButton>
          <NavButton $h={44} $line aria-label="Wheel">{I.navWheel}</NavButton>
          <NavButton $h={38} aria-label="Pan">{I.navHand}</NavButton>
          <NavButton $h={34} aria-label="Zoom">{I.navZoom}</NavButton>
          <NavButton $h={16} aria-label="Zoom menu"><Caret fill="#818181" w={6} /></NavButton>
          <NavButton $h={14} $end aria-label="Bar menu">{I.navMore}</NavButton>
        </NavBar>
        <CommandLine>
          <Grip>
            {I.grip}
            <IconButton aria-label="Close command line" $h={28}>{I.cmdClose}</IconButton>
            <IconButton aria-label="Command settings" $h={24}>{I.wrench}</IconButton>
          </Grip>
          <CommandArea>
            <History>Press ESC or ENTER to exit, or right-click to display shortcut menu.</History>
            <Prompt>
              {I.promptHand}
              <Caret w={10} fill="#666" />
              <PromptInput aria-label="Command" defaultValue="PAN" />
              <Caret w={10} fill="#666" up />
            </Prompt>
          </CommandArea>
        </CommandLine>
      </Canvas>
      <Strip />

      <StatusBar>
        <FileTabs $h={30}>
          <Slash />
          <FileTab>Model</FileTab>
          <Slash />
          <FileTab>a3</FileTab>
          <ActiveTab $end={21}>a4_alto</ActiveTab>
          <PlusButton aria-label="New layout">{I.plus}</PlusButton>
          <Slash />
        </FileTabs>
        <StatusTools>
          <StatusGroup><PaperButton>PAPER</PaperButton></StatusGroup>
          <StatusPair>
            <StatusGroup>
              <IconButton aria-label="Ortho" $h={30}>{I.ortho}</IconButton>
              <IconButton aria-label="Polar" $h={30}>{I.polar}</IconButton>
              <IconButton aria-label="Polar menu" $w={20} $h={30}><Caret w={10} /></IconButton>
              <IconButton aria-label="Isodraft" $h={30}>{I.iso}</IconButton>
              <IconButton aria-label="Isodraft menu" $w={20} $h={30}><Caret w={10} /></IconButton>
            </StatusGroup>
            <StatusGroup>
              <IconButton aria-label="Tracking" $h={30}>{I.track}</IconButton>
              <IconButton aria-label="Object snap" $h={30}>{I.osnap}</IconButton>
              <IconButton aria-label="Snap menu" $w={20} $h={30}><Caret w={10} /></IconButton>
            </StatusGroup>
          </StatusPair>
          <StatusGroup>
            <IconButton aria-label="Annotation scale" $h={30}>{I.annoScale}</IconButton>
            <IconButton aria-label="Annotation visibility" $h={30}>{I.annoVis}</IconButton>
            <IconButton aria-label="Auto scale" $h={30}>{I.annoAuto}</IconButton>
          </StatusGroup>
          <StatusPair>
            <StatusGroup>
              <IconButton aria-label="Workspace" $h={30}>{I.gear}</IconButton>
              <IconButton aria-label="Workspace menu" $w={20} $h={30}><Caret w={10} /></IconButton>
            </StatusGroup>
            <StatusGroup><IconButton aria-label="Annotation monitor" $h={30}>{I.plusBig}</IconButton></StatusGroup>
          </StatusPair>
          <StatusGroup><IconButton aria-label="Isolate objects" $h={30}>{I.shapes}</IconButton></StatusGroup>
          <StatusGroup><IconButton aria-label="Drawing status" $w={34} $h={30}>{I.dwg}</IconButton></StatusGroup>
          <StatusGroup>
            <IconButton aria-label="Clean screen" $h={30}>{I.full}</IconButton>
            <IconButton aria-label="Customization" $h={30}>{I.menu}</IconButton>
          </StatusGroup>
        </StatusTools>
      </StatusBar>
    </Window>
  );
}
